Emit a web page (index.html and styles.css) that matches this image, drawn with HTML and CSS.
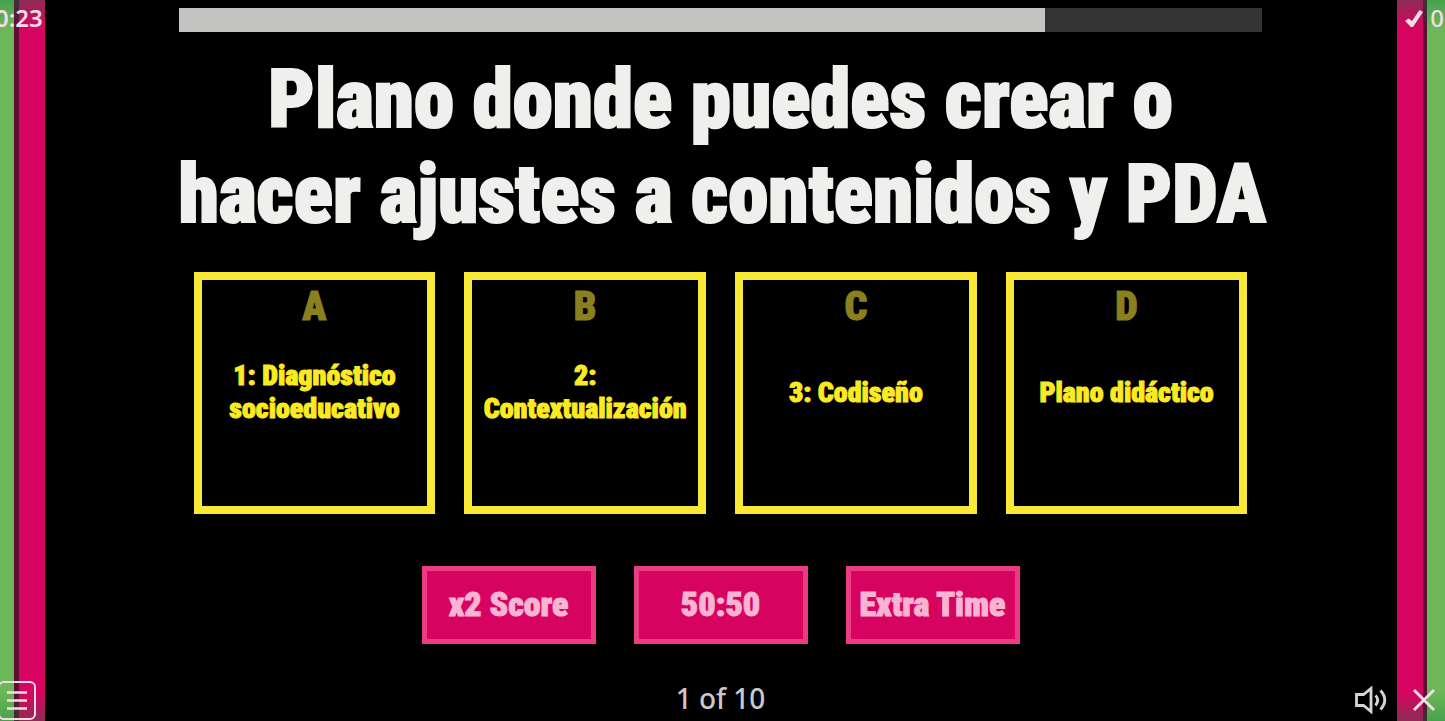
FILE: index.html
```
<!DOCTYPE html>
<html lang="es">
<head>
    <meta charset="UTF-8">
    <meta name="viewport" content="width=device-width, initial-scale=1.0">
    <title>Quiz</title>
    <link rel="stylesheet" href="styles.css">
</head>
<body>
    <div class="stage">
        <header class="topbar">
            <span class="timer">0:23</span>
            <div class="progress"><div class="progress-fill" style="width: 79.9%"></div></div>
            <div class="score">
                <svg width="20" height="20" viewBox="0 0 20 20">
                    <path d="M1 13L4.500 10.500L8 13L15.500 2L19 4L9 19H7Z" fill="currentColor"/>
                </svg>
                <span>0</span>
            </div>
        </header>

        <main class="content">
            <h1 class="question">Plano donde puedes crear o<br>hacer ajustes a contenidos y PDA</h1>

            <div class="answers">
                <button class="answer" type="button">
                    <span class="letter">A</span>
                    <span class="label">1: Diagnóstico socioeducativo</span>
                </button>
                <button class="answer" type="button">
                    <span class="letter">B</span>
                    <span class="label">2: Contextualización</span>
                </button>
                <button class="answer" type="button">
                    <span class="letter">C</span>
                    <span class="label">3: Codiseño</span>
                </button>
                <button class="answer" type="button">
                    <span class="letter">D</span>
                    <span class="label">Plano didáctico</span>
                </button>
            </div>

            <div class="lifelines">
                <button class="lifeline" type="button">x2 Score</button>
                <button class="lifeline" type="button">50:50</button>
                <button class="lifeline" type="button">Extra Time</button>
            </div>
        </main>

        <footer class="bottombar">
            <button class="icon-btn menu" type="button" aria-label="Menu">
                <svg width="38" height="40" viewBox="0 0 38 40" fill="none" stroke="currentColor">
                    <rect x="1" y="1" width="36" height="37" rx="5" stroke-width="2"/>
                    <path d="M9 11.500H29M9 19.500H29M9 27.500H29" stroke-width="2.600"/>
                </svg>
            </button>
            <span class="page">1 of 10</span>
            <div class="controls">
                <button class="icon-btn" type="button" aria-label="Sound">
                    <svg width="34" height="30" viewBox="0 0 34 30" fill="none" stroke="currentColor" stroke-width="2.800">
                        <path d="M2.500 9.500H9.500L17 3.500V26.500L9.500 20.500H2.500Z"/>
                        <path d="M21.500 10.500Q26 15 21.500 20.500M26.500 5.500Q35 15 26.500 24.500"/>
                    </svg>
                </button>
                <button class="icon-btn close" type="button" aria-label="Close">
                    <svg width="24" height="24" viewBox="0 0 24 24" fill="none" stroke="currentColor" stroke-width="3">
                        <path d="M2 2L22 22M22 2L2 22"/>
                    </svg>
                </button>
            </div>
        </footer>
    </div>
</body>
</html>
```
FILE: styles.css
```
*{
    margin: 0;
    padding: 0;
    box-sizing: border-box;
}
body{
    background-color: #000;
    font-family: "Noto Sans", sans-serif;
}
button{
    font: inherit;
    cursor: pointer;
}
/* side curtains, shaded at the top and bottom */
.stage{
    --shade: linear-gradient(to bottom, rgba(0,120,60,.35), transparent 28px, transparent calc(100% - 28px), rgba(0,120,60,.35));
    display: flex;
    flex-direction: column;
    min-height: 100vh;
    padding-right: 4px;
    overflow: hidden;
    background:
        var(--shade) left / 45px 100% no-repeat,
        var(--shade) right / 48px 100% no-repeat,
        linear-gradient(to right, #6cb757 14px, #5f0d33 14px, #5f0d33 19px, #d60460 19px) left / 45px 100% no-repeat,
        linear-gradient(to left, #6cb757 18px, #5f0d33 18px, #5f0d33 22px, #d60460 22px) right / 48px 100% no-repeat;
}
.topbar{
    display: grid;
    grid-template-columns: minmax(0, 1fr) 75vw minmax(0, 1fr);
    align-items: start;
    padding-top: 8px;
}
.timer,
.score{
    color: #f3dbe6;
    font-size: 24px;
    font-weight: 600;
    line-height: 20px;
}
.timer{
    margin-left: -5px;
}
.score{
    display: flex;
    justify-content: flex-end;
    align-items: center;
    gap: 6px;
    margin-right: -3px;
    font-weight: 500;
}
.progress{
    height: 24px;
    background: #333;
}
.progress-fill{
    height: 100%;
    background: #c3c3c1;
}
.content{
    width: 75vw;
    margin: 20px auto 0;
}
.question,
.answer,
.lifeline{
    font-family: "Roboto Condensed", "Roboto", sans-serif;
    font-weight: 900;
}
.question{
    color: #efefed;
    font-size: 81px;
    line-height: 95px;
    text-align: center;
    white-space: nowrap;
    -webkit-text-stroke: 2px;
}
.answers{
    display: grid;
    grid-template-columns: repeat(4, minmax(0, 1fr));
    gap: 29px;
    margin-top: 30px;
    padding: 0 15px;
}
.answer{
    display: flex;
    flex-direction: column;
    align-items: center;
    aspect-ratio: 1;
    padding: 7px 8px 48px;
    border: 8px solid #f7e935;
    background: #000;
    color: #fbea22;
    -webkit-text-stroke: 1px;
}
.letter{
    color: #8a8020;
    font-size: 40px;
    line-height: 40px;
}
.label{
    display: flex;
    align-items: center;
    flex: 1;
    font-size: 28px;
    line-height: 33px;
    text-align: center;
}
.lifelines{
    display: flex;
    justify-content: center;
    gap: 38px;
    margin-top: 52px;
}
.lifeline{
    width: 174px;
    height: 78px;
    padding-bottom: 2px;
    border: 5px solid #ea3c82;
    background: #d60460;
    color: #f8b4d2;
    font-size: 34px;
    white-space: nowrap;
    -webkit-text-stroke: 1px;
}
.bottombar{
    display: grid;
    grid-template-columns: minmax(0, 1fr) auto minmax(0, 1fr);
    align-items: center;
    margin-top: auto;
}
.icon-btn{
    display: flex;
    border: 0;
    background: none;
    color: #d6d6d6;
}
.menu,
.close{
    color: #f3dbe6;
}
.menu{
    justify-self: start;
    margin-left: -2px;
}
.page{
    padding-bottom: 6px;
    color: #c9c9c9;
    font-size: 28px;
    font-weight: 500;
    line-height: 34px;
}
.controls{
    display: flex;
    justify-content: flex-end;
    align-items: center;
    gap: 24px;
    padding: 0 5px 2px 0;
}
```
